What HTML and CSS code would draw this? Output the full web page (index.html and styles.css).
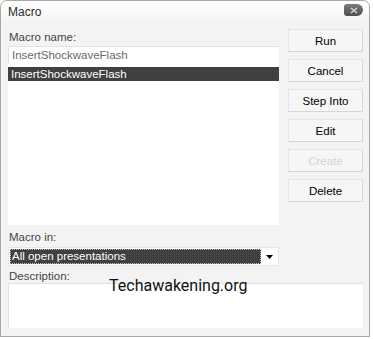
FILE: index.html
```html
<!DOCTYPE html>
<html>
<head>
<meta charset="utf-8">
<link rel="stylesheet" href="styles.css">
</head>
<body>
<div class="window">
  <div class="titlebar">
    <span class="title">Macro</span>
    <span class="close"><svg width="8" height="7" viewBox="0 0 8 7"><path d="M1 1L7 6M7 1L1 6" stroke="#d8d8d8" stroke-width="1.4"/></svg></span>
  </div>
  <div class="body">
    <div class="main">
      <div class="left">
        <div class="label first">Macro name:</div>
        <div class="namebox">InsertShockwaveFlash</div>
        <div class="list">
          <div class="item sel">InsertShockwaveFlash</div>
        </div>
        <div class="label">Macro in:</div>
        <div class="combo">
          <div class="combo-val"><span>All open presentations</span></div>
          <div class="combo-btn"><svg width="7" height="4" viewBox="0 0 7 4"><path d="M0 0H7L3.5 4Z" fill="#000"/></svg></div>
        </div>
        <div class="label">Description:</div>
      </div>
      <div class="buttons">
        <div class="btn">Run</div>
        <div class="btn">Cancel</div>
        <div class="btn">Step Into</div>
        <div class="btn">Edit</div>
        <div class="btn disabled">Create</div>
        <div class="btn">Delete</div>
      </div>
    </div>
    <div class="desc"></div>
  </div>
  <div class="watermark">Techawakening.org</div>
</div>
</body>
</html>
```
FILE: styles.css
```css
html, body {
  margin: 0;
  padding: 0;
  background: #ffffff;
}
body {
  width: 373px;
  height: 339px;
  overflow: hidden;
  font-family: "Liberation Sans", Arial, sans-serif;
  font-size: 11.5px;
}
.window {
  position: relative;
  box-sizing: border-box;
  width: 370px;
  height: 337px;
  border: 1px solid #a8a8a8;
  border-radius: 7px 7px 0 0;
  background: #f3f3f3;
}
.titlebar {
  height: 23px;
  display: flex;
  align-items: center;
  justify-content: space-between;
  padding: 0 6px 0 7px;
  background: linear-gradient(#ffffff, #f3f3f3);
  border-radius: 7px 7px 0 0;
}
.title {
  color: #2c2c2c;
  font-size: 12px;
  margin-top: -2px;
}
.close {
  width: 19px;
  height: 12px;
  border-radius: 3px 6px 6px 3px;
  background: linear-gradient(#7a7a7a, #505050);
  display: flex;
  align-items: center;
  justify-content: center;
  margin-top: -5px;
}
.body {
  padding: 5px 6px 0 7px;
}
.main {
  display: flex;
  gap: 9px;
}
.left {
  width: 271px;
  display: flex;
  flex-direction: column;
}
.label {
  color: #444;
  height: 14px;
  line-height: 14px;
  padding-left: 1px;
}
.label.first {
  margin-top: 1px;
  margin-bottom: 2px;
}
.namebox {
  height: 18px;
  box-sizing: border-box;
  background: #fff;
  border-top: 1px solid #e2e2e2;
  border-left: 1px solid #e2e2e2;
  color: #6a6a6a;
  line-height: 17px;
  padding-left: 3px;
}
.list {
  height: 161px;
  box-sizing: border-box;
  background: #fff;
  padding-top: 3px;
  margin-bottom: 5px;
}
.item {
  height: 14px;
  line-height: 14px;
  padding-left: 3px;
}
.item.sel {
  background: #404040;
  color: #fff;
}
.combo {
  display: flex;
  height: 19px;
  box-sizing: border-box;
  background: #fff;
  border: 1px solid #e6e6e6;
  padding: 1px;
  margin: 3px 0 3px;
}
.combo-val {
  flex: 1;
  background: #404040;
  color: #fff;
  outline: 1px dotted #c0c0c0;
  outline-offset: -1px;
  line-height: 15px;
  padding-left: 2px;
}
.combo-btn {
  width: 16px;
  display: flex;
  align-items: center;
  justify-content: center;
  background: #fff;
}
.buttons {
  display: flex;
  flex-direction: column;
  gap: 7px;
  width: 75px;
}
.btn {
  height: 23px;
  box-sizing: border-box;
  border: 1px solid #e4e4e4;
  border-right-color: #d6d6d6;
  border-bottom-color: #d6d6d6;
  background: #f6f6f6;
  display: flex;
  align-items: center;
  justify-content: center;
  color: #000;
}
.btn.disabled {
  color: #d4d4d4;
}
.desc {
  margin-top: 0;
  height: 44px;
  background: #fff;
  border-top: 1px solid #e2e2e2;
  border-left: 1px solid #e2e2e2;
}
.watermark {
  position: absolute;
  left: 108px;
  top: 275px;
  font-family: Roboto, sans-serif;
  font-size: 16px;
  color: #111;
}
```
